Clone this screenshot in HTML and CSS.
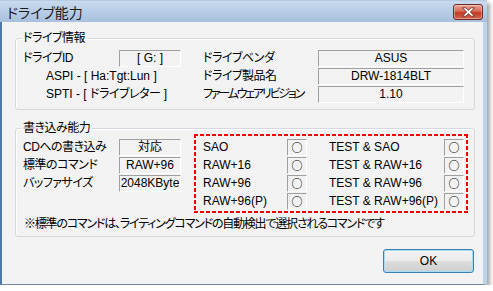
FILE: index.html
```html
<!DOCTYPE html>
<html lang="ja">
<head>
    <meta charset="UTF-8">
    <meta name="viewport" content="width=device-width, initial-scale=1.0">
    <title>ドライブ能力</title>
    <link rel="stylesheet" href="styles.css">
</head>
<body>
    <div class="window">
        <div class="titlebar">
            <span class="title">ドライブ能力</span>
            <button class="close-btn" aria-label="閉じる">
                <svg width="15" height="10" viewBox="0 0 15 10">
                    <path d="M1.5 0.8h3.4l2.6 2.5 2.6-2.5h3.4L9.4 5l4.1 4.2h-3.4L7.5 6.7 4.9 9.2H1.5L5.6 5z" fill="#fff" stroke="#5a2018" stroke-width="0.8" stroke-linejoin="round"/>
                </svg>
            </button>
        </div>

        <div class="client">
            <fieldset class="group info">
                <legend class="ja">ドライブ情報</legend>
                <div class="info-grid">
                    <span class="label ja">ドライブID</span>
                    <span class="field">[ G: ]</span>
                    <span class="label ja right">ドライブベンダ</span>
                    <span class="field">ASUS</span>

                    <span class="label sub">ASPI - [ Ha:Tgt:Lun ]</span>
                    <span class="label ja right">ドライブ製品名</span>
                    <span class="field">DRW-1814BLT</span>

                    <span class="label sub">SPTI - [ <span class="ja">ドライブレター</span> ]</span>
                    <span class="label ja tight right">ファームウェアリビジョン</span>
                    <span class="field">1.10</span>
                </div>
            </fieldset>

            <fieldset class="group write">
                <legend class="ja">書き込み能力</legend>
                <div class="write-body">
                    <div class="write-grid">
                        <span class="label ja">CDへの書き込み</span>
                        <span class="field">対応</span>
                        <span class="label ja">標準のコマンド</span>
                        <span class="field">RAW+96</span>
                        <span class="label ja">バッファサイズ</span>
                        <span class="field">2048KByte</span>
                    </div>

                    <div class="modes">
                        <span class="label">SAO</span>
                        <span class="field mark">○</span>
                        <span></span>
                        <span class="label">TEST &amp; SAO</span>
                        <span class="field mark">○</span>

                        <span class="label">RAW+16</span>
                        <span class="field mark">○</span>
                        <span></span>
                        <span class="label">TEST &amp; RAW+16</span>
                        <span class="field mark">○</span>

                        <span class="label">RAW+96</span>
                        <span class="field mark">○</span>
                        <span></span>
                        <span class="label">TEST &amp; RAW+96</span>
                        <span class="field mark">○</span>

                        <span class="label">RAW+96(P)</span>
                        <span class="field mark">○</span>
                        <span></span>
                        <span class="label">TEST &amp; RAW+96(P)</span>
                        <span class="field mark">○</span>
                    </div>
                </div>
                <p class="note ja">※標準のコマンドは、ライティングコマンドの自動検出で選択されるコマンドです</p>
            </fieldset>

            <div class="actions">
                <button class="ok-btn">OK</button>
            </div>
        </div>
    </div>
</body>
</html>
```

FILE: styles.css
```css
* {
    margin: 0;
    padding: 0;
    box-sizing: border-box;
}

body {
    font-family: "Liberation Sans", "Noto Sans CJK JP", sans-serif;
    font-feature-settings: "palt";
    font-size: 12px;
    color: #000;
    background: #fff;
}

/* MS UI Gothic is narrower than Noto for kana */
.ja {
    letter-spacing: -0.5px;
}

.ja.tight {
    letter-spacing: -2.2px;
}

.window {
    width: 487px;
    height: 285px;
    display: flex;
    flex-direction: column;
    box-shadow: 3px 3px 4px rgba(0,0,0,0.35);
}

.titlebar {
    height: 22px;
    display: flex;
    align-items: center;
    justify-content: space-between;
    padding: 0 4px 0 7px;
    background: linear-gradient(#c8daee, #a8c0de);
    border-top: 1px solid #b6cbe3;
}

.title {
    font-size: 14px;
    color: #1b1b1b;
    line-height: 16px;
    margin-top: 2px;
}

.close-btn {
    width: 30px;
    height: 16px;
    margin-top: 1px;
    border: 1px solid #6b2a22;
    border-radius: 3px;
    background: linear-gradient(#eaa493 0%, #d66a55 45%, #c23c27 55%, #d5654f 100%);
    display: flex;
    align-items: center;
    justify-content: center;
    box-shadow: inset 0 0 0 1px rgba(255,255,255,0.35);
}

.client {
    flex: 1;
    padding: 10px 8px 0 13px;
    background: repeating-conic-gradient(#eeeeee 0 25%, #f7f7f7 0 50%) 0 0 / 2px 2px;
    border-left: 2px solid #4f77aa;
    border-right: 4px solid #bcd3ec;
    border-bottom: 1px solid #6f87a4;
}

.group {
    border: 1px solid #d3d9de;
    border-radius: 3px;
    box-shadow: inset 1px 1px 0 #fff;
}

.group legend {
    line-height: 12px;
    padding: 0 2px;
    margin-left: -2px;
}

.info {
    padding: 6px 10px 6px 7px;
}

.write {
    margin-top: 12px;
    padding: 0 6px 5px 7px;
}

.label {
    line-height: 17px;
    white-space: nowrap;
}

.label.sub {
    grid-column: 1 / 3;
    padding-left: 23px;
}

.field {
    line-height: 15px;
    text-align: center;
    white-space: nowrap;
    border-top: 1px solid #a0a0a0;
    border-left: 1px solid #a0a0a0;
    border-right: 1px solid #fff;
    border-bottom: 1px solid #fff;
}

.info-grid {
    display: grid;
    grid-template-columns: 96px 62px 22px 115px 146px;
    grid-auto-rows: 17px;
    row-gap: 1px;
}

.info-grid .right {
    grid-column: 4;
}

.write-body {
    display: flex;
    gap: 13px;
}

.write-grid {
    margin-top: 5px;
    display: grid;
    grid-template-columns: 96px 62px;
    grid-auto-rows: 17px;
    row-gap: 1px;
    align-content: start;
}

.modes {
    width: 274px;
    padding: 5px 4px 3px 9px;
    display: grid;
    grid-template-columns: 84px 20px 22px 115px 20px;
    grid-auto-rows: 17px;
    row-gap: 1px;
    background:
        repeating-linear-gradient(90deg, #f00000 0 4px, transparent 4px 6px) top / 100% 2px no-repeat,
        repeating-linear-gradient(90deg, #f00000 0 4px, transparent 4px 6px) bottom / 100% 2px no-repeat,
        repeating-linear-gradient(180deg, #f00000 0 4px, transparent 4px 6px) left / 2px 100% no-repeat,
        repeating-linear-gradient(180deg, #f00000 0 4px, transparent 4px 6px) right / 2px 100% no-repeat;
}

.mark {
    font-family: "Noto Sans CJK JP", sans-serif;
    font-size: 11px;
    font-weight: 700;
    line-height: 15px;
}

.note {
    margin-top: 4px;
    line-height: 14px;
    padding-left: 1px;
    letter-spacing: -1.2px;
}

.actions {
    display: flex;
    justify-content: flex-end;
    margin-top: 12px;
    padding-right: 1px;
}

.ok-btn {
    width: 91px;
    height: 24px;
    font-family: inherit;
    font-size: 12px;
    color: #000;
    border: 1px solid #3c7fb1;
    border-radius: 3px;
    background: linear-gradient(#f3f3f3 0%, #ebebeb 50%, #dddddd 51%, #cfcfcf 100%);
    box-shadow: inset 0 0 0 1px #a6dcf6;
}
```
